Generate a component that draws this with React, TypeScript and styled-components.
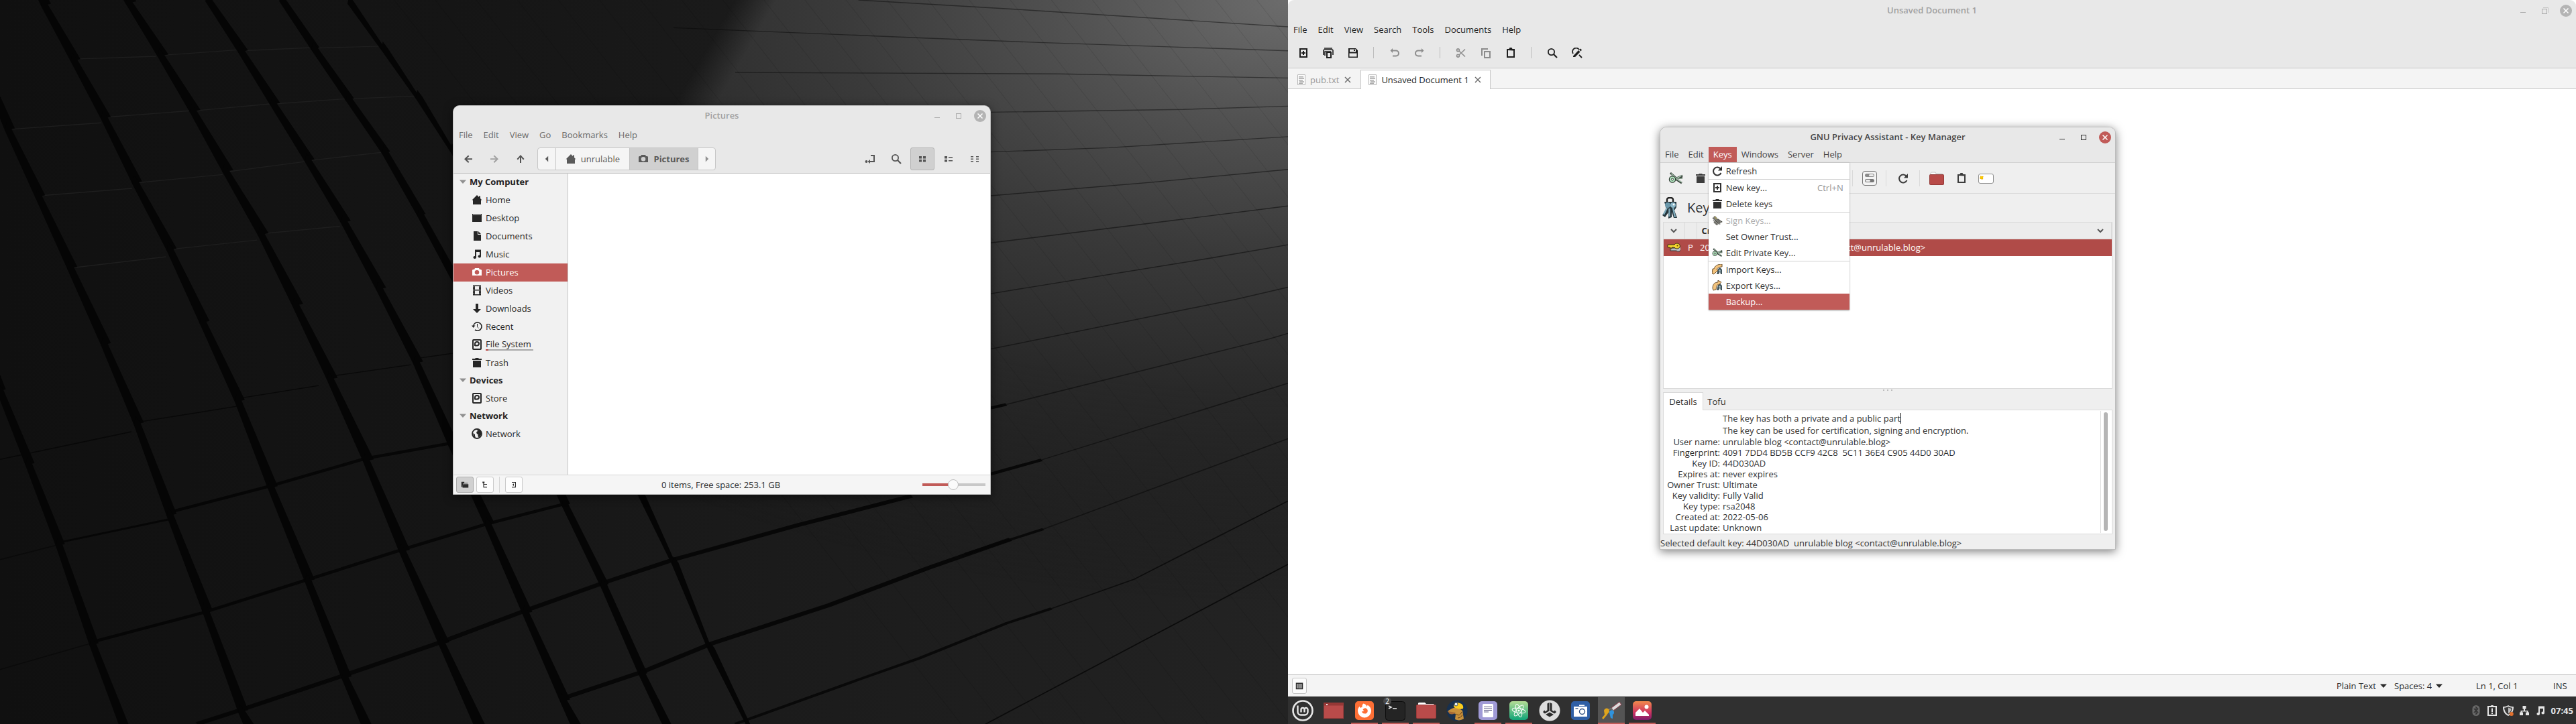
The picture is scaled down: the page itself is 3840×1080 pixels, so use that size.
import React from "react";
import styled, { createGlobalStyle } from "styled-components";

const GlobalStyle = createGlobalStyle`
  *, *::before, *::after { box-sizing: border-box; }
  body { margin: 0; background: #111; }
  body, button, input, select, textarea {
    font-family: "Open Sans", "Noto Sans", sans-serif;
    font-size: 13px;
    line-height: 18px;
    color: #2b2b2b;
  }
  button { background: none; border: 0; padding: 0; margin: 0; color: inherit; white-space: nowrap; }
  h1, h2, h3, p, ul, dl, dd, dt { margin: 0; padding: 0; font-weight: inherit; font-size: inherit; }
  ul { list-style: none; }
  svg { display: block; flex: none; }
`;

const ACCENT = "#c15b58";

/* ---------- symbolic icons (16 px grid) ---------- */

const glyphs: Record<string, React.ReactNode> = {
  home: <path d="M8 1 0.5 8.5H2V15h12V8.500h1.500L13 6V2.500h-2V4z" />,
  desktop: <path fillRule="evenodd" d="M1 2h14v12H1zM2 3v1h12V3z" />,
  document: <path fillRule="evenodd" d="M3 1h6v5h5v9H3zM10 1l4 4h-4z" />,
  music: <path d="M5 1.500h9V11.500a2.300 2 0 1 1-2-2V5H7v8a2.300 2 0 1 1-2-2z" />,
  camera: <path fillRule="evenodd" d="M5 2h6l1 2h2l1 1v8H1V5l1-1h2zM8 5a3.300 3.300 0 1 0 0 6.600A3.300 3.300 0 0 0 8 5z" />,
  video: <path fillRule="evenodd" d="M2 .5h12v15H2zM5 2v5h6V2zM5 8.500V14h6V8.500zM3 2v1h1V2zm0 2v1h1V4zm0 2v1h1V6zm0 2v1h1V8zm0 2v1h1v-1zm0 2v1h1v-1zm9-10v1h1V2zm0 2v1h1V4zm0 2v1h1V6zm0 2v1h1V8zm0 2v1h1v-1zm0 2v1h1v-1z" />,
  download: <path d="M6 1h4v8h4l-6 6-6-6h4z" />,
  recent: (
    <g fill="none" stroke="currentColor">
      <path strokeWidth="1.600" d="M2.600 8.500A6.200 6.200 0 1 1 5 13" />
      <path d="M8.500 4v4.500l2 2" />
      <path fill="currentColor" stroke="none" d="M0 6.500h5.500L2.500 10z" />
    </g>
  ),
  disk: (
    <g fill="none" stroke="currentColor">
      <rect x="2" y="1" width="12" height="14" rx="1" strokeWidth="2" />
      <path strokeWidth="2" d="M5 10V6.500a3 2.800 0 1 1 3 3H5" />
    </g>
  ),
  trash: <path d="M1 2h4l1-1h4l1 1h4v2H1zM2 5h12v10H2z" />,
  globe: (
    <>
      <circle cx="8" cy="8" r="7" fill="none" stroke="currentColor" strokeWidth="1.800" />
      <path d="M8 1.500 14 4v6l-3 3.500-1.500-1.500V8.500H8L7 5.500 9 4zM2 7l3 2v2l1 3-3-2z" />
    </>
  ),
  back: <path d="M8 2.500 9.400 4 6 7.200h8v2H6L9.400 12.500 8 14 2 8.200z" />,
  forward: <path d="M8 2.500 6.600 4 10 7.200H2v2h8L6.600 12.500 8 14l6-5.800z" />,
  up: <path d="M2.500 8 4 9.400 7 6v8h2V6l3 3.400L13.500 8 8 2z" />,
  triLeft: <path d="M10.500 3v10L5.500 8z" />,
  triRight: <path d="M5.500 3v10l5-5z" />,
  triDown: <path d="M3 5.500h10l-5 5.500z" />,
  chevron: <path fill="none" stroke="currentColor" strokeWidth="2" d="M4 6l4 4 4-4" />,
  location: (
    <>
      <circle cx="2.500" cy="12" r="1.900" />
      <path d="M8 9v2h5V4H9V2h6v11H8v2l-3.500-3z" />
    </>
  ),
  search: (
    <g fill="none" stroke="currentColor">
      <circle cx="6.500" cy="6.500" r="4.600" strokeWidth="1.800" />
      <path strokeWidth="2.200" d="M10 10l5 5" />
    </g>
  ),
  grid: <path d="M3 4h4v3.500H3zm6 0h4v3.500H9zM3 9h4v3.500H3zm6 0h4v3.500H9z" />,
  list: <path d="M2 4h4v3.500H2zm0 5h4v3.500H2zM8 5h6v1.500H8zm0 5h6v1.500H8z" />,
  compact: <path d="M2 4h4v1.500H2zm0 3.500h4V9H2zM2 11h4v1.500H2zm8-7h4v1.500h-4zm0 3.500h4V9h-4zm0 3.500h4v1.500h-4z" />,
  folder: <path d="M2 3h5v2h6v1H5L4 12H2zM5 7h9v6H4z" />,
  tree: <path d="M3 2h4v3H6v1.500h6V8H6v4h6v1.500H4.500V5H3z" />,
  collapse: <path d="M4 2.500h8v11H4V12h6.500V4H4zM8 5.500v5L5 8z" />,
  plusDoc: <path fillRule="evenodd" d="M2 1h12v14H2zM4 3v10h8V3zM7 5h2v2h2v2H9v2H7V9H5V7h2z" />,
  folders: (
    <>
      <path fill="none" stroke="currentColor" strokeWidth="1.600" d="M2 1h12M1 11V4l1-1h12l1 1v7" />
      <path fill="none" stroke="currentColor" strokeWidth="1.600" d="M3 12V6h9" />
      <path fillRule="evenodd" d="M5 6h8v10H5zM7 8v6h4V8z" />
    </>
  ),
  save: <path fillRule="evenodd" d="M1 1h11l3 3v11H1zM3 2.500v4h9v-4zM2.500 8.500v5h11v-5zM9 3h2v2H9z" />,
  undo: <path d="M5 1 1.500 4.500 5 8V5.500h5a3 3 0 0 1 0 6H5v2h5a5 5 0 0 0 0-10H5z" />,
  redo: <path d="M11 1l3.500 3.500L11 8V5.500H6a3 3 0 0 0 0 6h5v2H6a5 5 0 0 1 0-10h5z" />,
  cut: (
    <g fill="none" stroke="currentColor" strokeWidth="1.600">
      <circle cx="3.500" cy="3.800" r="1.900" />
      <circle cx="3.500" cy="12.200" r="1.900" />
      <path d="M5 5l9 8.500M5 11l9-8.500" />
    </g>
  ),
  copy: <path fillRule="evenodd" d="M1 1h10v2H3v9H1zM5 5h10v11H5zm2 2v7h6V7z" />,
  paste: <path fillRule="evenodd" d="M2 2h3.500l1-2h3l1 2H14v13H2zm2 2v9h8V4.500z" />,
  replace: (
    <>
      <path fill="none" stroke="currentColor" strokeWidth="1.800" d="M2 9a5 5 0 0 1 9-6M11 11l4 4" />
      <path d="M2 12.500 10 4l2.500 2.500L5 14H2zM11 3l2-1.500L15 3.500 13.500 5.500z" />
    </>
  ),
  refresh: (
    <g fill="none" stroke="currentColor" strokeWidth="2">
      <path d="M13 5A6 6 0 1 0 13.500 11" />
      <path fill="currentColor" stroke="none" d="M15 1v6.500H9z" />
    </g>
  ),
  sidebar: (
    <>
      <path fill="#8a8a8a" d="M6 3h7v10H6z" />
      <path fillRule="evenodd" d="M1 2h14v13H1zM3 4v9h1.500V4zM6 4v9h7V4z" />
    </>
  ),
  bluetooth: (
    <>
      <rect x="2.500" y="0" width="11" height="16" rx="5.500" fill="#686868" />
      <path fill="none" stroke="#303030" strokeWidth="1.200" d="M4.800 5l6 5.500L8 13.300V2.700l2.800 2.800L4.800 11" />
    </>
  ),
  notify: <path fillRule="evenodd" d="M1 1h4.500L7 0h2l1.500 1H15v15H1zM3 3v11h10V3zM7 4.500h2V10H7zM7 11h2v2H7z" />,
  shield: (
    <>
      <path d="M8 0c2 1.500 5 2.200 8 2.200 0 6-2 10.800-8 13.800C2 13 0 8 0 2.200 3 2.200 6 1.500 8 0z" />
      <path fill="#3a3a3a" d="M8 2c2 1 4 1.600 6 1.700-.3 4.500-2 7.800-6 10.300C4 11.500 2.300 8 2 3.700 4 3.600 6 3 8 2z" />
      <path fill="#bdbdbd" d="M8 3.500c1.500.8 3 1.200 4.500 1.400C12 8.500 11 10.500 8 12.500z" />
      <circle cx="12.800" cy="13" r="3" fill="#e0702f" />
    </>
  ),
  network: <path d="M5.500 1h5v4.500H9V8h4.500v2.500H15V15h-5v-4.500h2V9.500H4v1H6V15H1v-4.500h1.500V8H7V5.500H5.500z" />,
  textFile: (
    <>
      <path fill="#fcfcfc" stroke="#b4b4b4" d="M2.500 .5h11v15h-11z" />
      <path fill="none" stroke="#a8a8a8" strokeWidth="1.500" d="M4 3.700h7M4 6.200h8M4 8.700h6M5 11h7M4 13.200h6" />
    </>
  ),
};

const Sym = ({ name, size = 16 }: { name: string; size?: number }) => (
  <svg width={size} height={size} viewBox="0 0 16 16" fill="currentColor" aria-hidden="true">
    {glyphs[name]}
  </svg>
);

/* ---------- coloured drawings of the key manager ---------- */

const EditKeyArt = ({ size = 22 }: { size?: number }) => (
  <svg width={size} height={size} viewBox="0 0 22 22" aria-hidden="true">
    <path d="M3 3l9 8 9-4M11 12l9 6M12 11l9-1" stroke="#2e3a32" strokeWidth="3" fill="none" />
    <path d="M4 4l8 7 8-4M12 12l8 5M13 11h8" stroke="#b9d8c0" strokeWidth="1.200" fill="none" />
    <circle cx="6" cy="12.500" r="4.600" fill="#b7ecc4" stroke="#2e3a32" strokeWidth="1.300" />
    <circle cx="6" cy="12.500" r="1.600" fill="#fff" stroke="#2e3a32" />
  </svg>
);

const SignArt = () => (
  <svg width="16" height="16" viewBox="0 0 16 16" aria-hidden="true">
    <path d="M1 4l4-3 5 6-5 3zM2 11l8-5 6 4-9 5z" fill="#8d8d86" />
    <path d="M1 4l9 8M3 2l9 9M2 8l6 7M5 8l8 6M9 6l6 4" stroke="#33332f" strokeDasharray="1 1" strokeWidth="1.300" />
    <path d="M4 2l3 4" stroke="#d6c14a" />
  </svg>
);

const TransferArt = ({ out }: { out?: boolean }) => (
  <svg width="16" height="16" viewBox="0 0 16 16" aria-hidden="true">
    <path d="M9 7l3-2 3 3v7h-2l-1-4-2 4H7z" fill="#43565c" />
    <path d="M10 9l2-1 1 2-1 2z" fill="#a7c3ce" />
    <path d={out ? "M1 12C1 6 4 3 9 3V0l5 3-4 4C7 6 7 9 6 14L2 15z" : "M0 14l1-7h2C4 3 8 0 15 0v4C10 4 8 6 7 8l2 1-6 6z"} fill="#f3c37c" stroke="#6b5030" />
  </svg>
);

const KeyRingArt = () => (
  <svg width="24" height="32" viewBox="0 0 24 32" aria-hidden="true">
    <rect x="8" y="1" width="9" height="9" rx="3" fill="#f4f4f4" stroke="#222" strokeWidth="2.400" />
    <path d="M4 7h18v8l-3 5 4 11h-5l-3-9v8l-5 2v-9l-5 7-4-3 6-9z" fill="#25353c" />
    <circle cx="9" cy="12" r="4" fill="#6a98ab" />
    <circle cx="17" cy="12" r="4" fill="#8ab6c8" />
    <circle cx="18" cy="11" r="1.500" fill="#fff" />
    <path d="M8 16l-5 10M11.500 17v12M17 16l3 14" stroke="#7eaabb" strokeWidth="2.400" />
  </svg>
);

const KeyPairArt = () => (
  <svg width="20" height="14" viewBox="0 0 20 14" aria-hidden="true">
    <path d="M5 8h8a4 4 0 1 1 1 4H5z" fill="#b9c0c4" stroke="#333" />
    <path d="M1 3h10a4.500 4 0 1 1 0 4H7v2H5V7H1z" fill="#f4d62e" stroke="#3b3410" />
    <circle cx="15.500" cy="4.500" r="1.100" fill="#5a3510" />
  </svg>
);

const PrefsArt = () => (
  <svg width="22" height="22" viewBox="0 0 22 22" aria-hidden="true">
    <rect x=".5" y=".5" width="21" height="21" rx="3.500" fill="#f4f4f4" stroke="#777" />
    <rect x="4" y="4" width="14" height="5" rx="2.500" fill="#8a8a8a" />
    <rect x="10" y="5" width="7" height="3" rx="1.500" fill="#eee" />
    <rect x="4" y="12" width="14" height="5" rx="2.500" fill="#777" />
    <rect x="5" y="13" width="7" height="3" rx="1.500" fill="#eee" />
  </svg>
);

const FolderArt = () => (
  <svg width="22" height="20" viewBox="0 0 22 20" aria-hidden="true">
    <path d="M2 5V2l1-1h6l1 2h9l1 1v3H2z" fill="#fff" stroke="#c4c4c4" />
    <rect x=".5" y="4.500" width="21" height="15" rx="1" fill="#b84a48" stroke="#943a38" />
  </svg>
);

const CardArt = () => (
  <svg width="23" height="16" viewBox="0 0 23 16" aria-hidden="true">
    <rect x=".5" y="1.500" width="22" height="14" rx="2.500" fill="#fff" stroke="#8f8f8f" />
    <rect x="3" y="5" width="4" height="4" fill="#f8d000" stroke="#e89a00" strokeDasharray="1 1" />
  </svg>
);

/* ---------- taskbar drawings (32 px grid) ---------- */

const Rounded = ({ fill, children }: { fill: string; children?: React.ReactNode }) => (
  <>
    <rect x="2" y="2" width="28" height="28" rx="5" fill={fill} />
    {children}
  </>
);

const taskArt: Record<string, React.ReactNode> = {
  mint: (
    <g fill="none" stroke="#e6e6e6">
      <circle cx="16" cy="16" r="14.500" strokeWidth="2.600" />
      <path strokeWidth="2.400" d="M8.500 8.500V18a4.500 4.500 0 0 0 4.500 4.500h6a4.500 4.500 0 0 0 4.500-4.500v-3.500a2.500 2.500 0 0 0-5 0V18.500M18.500 14.500a2.500 2.500 0 0 0-5 0v4" />
    </g>
  ),
  show: (
    <>
      <rect x="1.500" y="4.500" width="29" height="23" fill="#b94b4a" stroke="#9c3b3a" />
      <rect x="1" y="4" width="30" height="4.500" fill="#953836" />
      <rect x="5" y="6" width="2" height="2" fill="#eee" />
    </>
  ),
  firefox: (
    <Rounded fill="#fd6f35">
      <path fill="#fff" d="M14.500 5.500c3 .8 4.500 2.500 5 4.500l1.200-2.200c3.600 2 5.300 5 5.300 8.700a10 10 0 0 1-20 0c0-3 1-5 2.600-6.800l1 2.300c1-.8 2-1 3-1-.3-2.200.2-4 1.900-5.500z" />
      <path fill="#fd6f35" d="M17.500 12.200c-1.800.2-3 .9-3.600 1.900-.6 1-.2 1.500 1.600 1.800-.7 1.300-1.900 1.700-3.600 1.100.4 2.300 2 3.600 4.300 3.600 2.700 0 4.600-1.700 4.600-4.200 0-2-1.200-3.600-3.300-4.200z" />
    </Rounded>
  ),
  terminal: (
    <>
      <rect x="1.500" y="2.500" width="29" height="28" rx="4" fill="#242424" stroke="#0c0c0c" />
      <path stroke="#eee" strokeWidth="1.500" fill="none" d="M6 9l4 2-4 2M12 13h6" />
    </>
  ),
  files: (
    <>
      <path d="M4 8V5l1-1h9l2 2h11l1 1v4H4z" fill="#fff" />
      <rect x="1.500" y="7.500" width="29" height="20" rx="1" fill="#b94b4a" stroke="#9c3b3a" />
    </>
  ),
  mole: (
    <>
      <circle cx="16" cy="16" r="15.500" fill="#17304f" />
      <path d="M2 17c6-5 13-7 17-4l5 3 2 12c-4 3-9 3-13 1l1-8C10 19 6 20 2 17z" fill="#c8913c" />
      <path d="M2 17l3 4c4 1 7 0 9-2" fill="#a86b35" />
      <path d="M15 21c3 3 6 2 8-3M17 27c3 0 6-2 7-5" stroke="#5d3a18" fill="none" />
      <path d="M11 10c0-5 5-7 9-5 4 1 6 4 5 8l-4 1-8-2z" fill="#f9cc1e" />
      <circle cx="14.500" cy="6.500" r="2.500" fill="#e8f0f5" stroke="#40505a" />
    </>
  ),
  editor: (
    <Rounded fill="#a09ad6">
      <rect x="8" y="6" width="16" height="20" rx="1.500" fill="#fff" />
      <path stroke="#5d5a86" strokeWidth="1.200" d="M10 10.500h12M10 13h12M10 15.500h12M10 18h7" />
    </Rounded>
  ),
  atom: (
    <>
      <defs>
        <linearGradient id="atomBg" x1="0" y1="0" x2="0" y2="1">
          <stop offset="0" stopColor="#b5dd95" />
          <stop offset="1" stopColor="#0fa578" />
        </linearGradient>
      </defs>
      <Rounded fill="url(#atomBg)">
        <g fill="none" stroke="#fff">
          <ellipse cx="16" cy="16" rx="10" ry="3.500" transform="rotate(10 16 16)" />
          <ellipse cx="16" cy="16" rx="10" ry="3.500" transform="rotate(70 16 16)" />
          <ellipse cx="16" cy="16" rx="10" ry="3.500" transform="rotate(130 16 16)" />
        </g>
        <circle cx="16" cy="16" r="1.600" fill="#fff" />
      </Rounded>
    </>
  ),
  tri: (
    <>
      <circle cx="16" cy="16" r="15.500" fill="#dedede" />
      <path fill="#2b2b2b" d="M12.500 5.500l3-1.500v12.500l-6.500 4-2.500-1.500V17l2.500-1.500v2l3.500-2zM19.500 5.500l-3-1.500v12.500l6.500 4 2.500-1.500V17L23 15.500v2l-3.500-2zM16 18.500l6 3.500-6 3.500-6-3.500z" />
    </>
  ),
  shot: (
    <Rounded fill="#2f5fa5">
      <path fill="#fff" d="M14 7.500h8V9h-8zM6 10h20v15H6z" />
      <circle cx="18.500" cy="17.500" r="4" fill="#fff" stroke="#2f4f80" strokeWidth="1.400" />
      <path d="M8.500 13h4" stroke="#2f4f80" strokeWidth="1.400" />
    </Rounded>
  ),
  gpa: (
    <>
      <path d="M16 12 28 3l3 4-12 9z" fill="#dcdcdc" stroke="#8d3b49" />
      <path d="M7 16l9-3 3 3v4" fill="none" stroke="#777" strokeWidth="1.600" />
      <path d="M5 16a4 4 0 1 1 6 4l-2 3-5 6-2-2 4-5z" fill="#e0a51c" />
      <path d="M13 19a3.500 3.500 0 1 1 5 3v6l-3-1z" fill="#2f93dd" />
    </>
  ),
  pictures: (
    <>
      <defs>
        <linearGradient id="picBg" x1="0" y1="0" x2="0" y2="1">
          <stop offset="0" stopColor="#f28a4c" />
          <stop offset=".6" stopColor="#cf3462" />
          <stop offset="1" stopColor="#7c1b6a" />
        </linearGradient>
      </defs>
      <Rounded fill="url(#picBg)">
        <circle cx="22.500" cy="10.500" r="3" fill="#fff" />
        <path fill="#fff" d="M6 24v-5l6-6 5 6 3-3 6 6v2z" />
      </Rounded>
    </>
  ),
};

/* ---------- wallpaper ---------- */

type Pt = [number, number];

const ridges: { w: number; pts: Pt[] }[] = [
  { w: 14, pts: [[-30, 700], [-2, 840], [33, 1000], [70, 1175], [111, 1390], [148, 1568]] },
  { w: 15, pts: [[-25, 130], [8, 275], [45, 420], [84, 575], [125, 740], [165, 912], [205, 1110], [248, 1315], [292, 1535], [300, 1568]] },
  { w: 15, pts: [[25, -100], [52, 5], [88, 125], [125, 250], [163, 390], [205, 535], [245, 692], [288, 863], [328, 1050], [373, 1252], [418, 1462], [443, 1568]] },
  { w: 16, pts: [[120, -100], [155, 0], [194, 115], [233, 235], [273, 365], [316, 502], [358, 655], [400, 815], [444, 992], [488, 1188], [536, 1388], [580, 1568]] },
  { w: 15, pts: [[252, -5], [292, 106], [331, 220], [373, 342], [417, 475], [460, 620], [505, 780], [548, 958], [592, 1130], [638, 1322], [684, 1512], [698, 1568]] },
  { w: 13, pts: [[342, -5], [381, 100], [423, 210], [467, 325], [510, 460], [555, 610], [600, 770], [645, 930], [686, 1088], [733, 1262], [780, 1455], [810, 1568]] },
  { w: 7, pts: [[425, 0], [466, 100], [508, 205], [550, 320], [610, 500], [700, 780], [780, 1070], [820, 1215], [864, 1400], [912, 1568]] },
];

const seams: { w: number; o: number; pts: Pt[] }[] = [
  { w: 4, o: 0.9, pts: [[72, 1175], [205, 1125]] },
  { w: 6, o: 0.9, pts: [[205, 1110], [330, 1052], [445, 993], [548, 960]] },
  { w: 6, o: 0.9, pts: [[113, 1390], [245, 1328], [375, 1255], [490, 1190], [594, 1134], [690, 1090]] },
  { w: 8, o: 0.9, pts: [[240, 1568], [297, 1535], [420, 1462], [538, 1390], [640, 1322], [735, 1262], [820, 1212], [970, 1138], [1110, 1074]] },
  { w: 8, o: 0.9, pts: [[686, 1512], [782, 1455], [866, 1394], [1010, 1310], [1130, 1230], [1230, 1168]] },
  { w: 5, o: 0.85, pts: [[1175, 1200], [1270, 1146]] },
  { w: 5, o: 0.85, pts: [[895, 1568], [1045, 1472], [1120, 1425], [1225, 1350], [1280, 1318]] },
  { w: 2, o: 0.7, pts: [[1280, 1318], [1380, 1255], [1568, 1085]] },
  { w: 2, o: 0.8, pts: [[1200, 1568], [1568, 1222]] },
  { w: 2, o: 0.8, pts: [[0, 995], [160, 935]] },
  { w: 2, o: 0.8, pts: [[165, 915], [288, 880]] },
  { w: 2, o: 0.8, pts: [[290, 863], [388, 835]] },
  { w: 2, o: 0.8, pts: [[402, 815], [500, 790]] },
  { w: 2, o: 0.8, pts: [[505, 777], [552, 765]] },
  { w: 2, o: 0.6, pts: [[0, 1450], [113, 1392]] },
  { w: 2, o: 0.6, pts: [[0, 1212], [70, 1180]] },
  { w: 6, o: 0.9, pts: [[1195, 888], [1225, 876]] },
  { w: 6, o: 0.9, pts: [[1195, 1032], [1268, 996]] },
  { w: 2, o: 0.45, pts: [[1045, 0], [1235, 20], [1568, 58]] },
  { w: 2, o: 0.45, pts: [[820, 60], [1120, 82], [1265, 92], [1568, 110]] },
  { w: 2, o: 0.45, pts: [[895, 157], [1290, 160], [1568, 169]] },
  { w: 2, o: 0.45, pts: [[1206, 243], [1440, 237], [1568, 230]] },
  { w: 2, o: 0.45, pts: [[1206, 329], [1350, 320], [1568, 296]] },
  { w: 2, o: 0.5, pts: [[1206, 424], [1400, 395], [1568, 367]] },
  { w: 2, o: 0.5, pts: [[1206, 526], [1430, 477], [1568, 446]] },
  { w: 2, o: 0.5, pts: [[1206, 636], [1470, 560], [1568, 530]] },
  { w: 2, o: 0.5, pts: [[1206, 756], [1505, 648], [1568, 622]] },
  { w: 2, o: 0.5, pts: [[1225, 876], [1545, 734], [1568, 722]] },
  { w: 2, o: 0.5, pts: [[1268, 996], [1568, 830]] },
  { w: 2, o: 0.5, pts: [[1270, 1146], [1568, 950]] },
];

/* faint edges along the lit tiles, where each tile meets the next one */
const highlights: Pt[][] = [
  [[90, 128], [190, 122]],
  [[195, 120], [290, 108]],
  [[294, 110], [380, 103]],
  [[384, 104], [464, 100]],
  [[127, 254], [231, 240]],
  [[236, 240], [329, 225]],
  [[334, 225], [421, 214]],
  [[426, 214], [506, 208]],
  [[12, 280], [123, 266]],
  [[48, 424], [161, 408]],
  [[166, 396], [271, 378]],
  [[277, 372], [371, 350]],
  [[376, 348], [465, 330]],
  [[320, 506], [414, 490]],
  [[208, 540], [313, 520]],
  [[88, 580], [202, 556]],
];

const slants = Array.from({ length: 26 }, (_, i) => 480 + i * 50);

const WallpaperSvg = styled.svg`
  position: absolute;
  inset: 0;
  width: 100%;
  height: 100%;
`;

const Wallpaper = () => (
  <WallpaperSvg viewBox="0 0 1568 1568" preserveAspectRatio="none" aria-hidden="true">
    <defs>
      <linearGradient id="base" x1="0" y1="0" x2="1" y2="0">
        <stop offset="0" stopColor="#101010" />
        <stop offset=".35" stopColor="#151515" />
        <stop offset=".6" stopColor="#1b1b1b" />
        <stop offset="1" stopColor="#232323" />
      </linearGradient>
      <radialGradient id="glow" gradientUnits="userSpaceOnUse" cx="1568" cy="0" r="1300">
        <stop offset="0" stopColor="#6c6c6c" />
        <stop offset=".2" stopColor="#525252" />
        <stop offset=".42" stopColor="#3a3a3a" />
        <stop offset=".65" stopColor="#292929" />
        <stop offset="1" stopColor="#1f1f1f" stopOpacity="0" />
      </radialGradient>
      <linearGradient id="edge" gradientUnits="userSpaceOnUse" x1="868" y1="80" x2="914" y2="95">
        <stop offset="0" stopColor="#fff" stopOpacity="0" />
        <stop offset="1" stopColor="#fff" />
      </linearGradient>
      <mask id="beam">
        <rect width="1568" height="1568" fill="url(#edge)" />
      </mask>
    </defs>
    <rect width="1568" height="1568" fill="url(#base)" />
    <rect width="1568" height="1568" fill="url(#glow)" mask="url(#beam)" />
    <g stroke="#000" strokeOpacity=".09" strokeWidth="1">
      {slants.map((x) => (
        <line key={x} x1={x} y1="0" x2={x + 690} y2="1568" />
      ))}
    </g>
    {highlights.map((h, i) => (
      <polyline key={i} points={h.join(" ")} fill="none" stroke="#1e1e1e" strokeWidth="2" />
    ))}
    {seams.map((s, i) => (
      <polyline key={i} points={s.pts.join(" ")} fill="none" stroke="#060606" strokeOpacity={s.o} strokeWidth={s.w} />
    ))}
    {ridges.map((r, i) =>
      r.pts.slice(0, -1).map((p, j) => {
        const q = r.pts[j + 1];
        return (
          <polygon
            key={`${i}-${j}`}
            fill="#050505"
            points={`${p[0]},${p[1] - 10} ${p[0] + 6},${p[1] + 4} ${q[0] + r.w - 5},${q[1] + 3} ${q[0] - 2},${q[1] + 8} ${p[0] - 2},${p[1] + 8}`}
          />
        );
      })
    )}
  </WallpaperSvg>
);

/* ---------- shared window parts ---------- */

const Desktop = styled.div`
  display: grid;
  grid-template-columns: 1fr 1fr;
  min-height: 100vh;
`;

const Screen = styled.section`
  position: relative;
  display: flex;
  flex-direction: column;
  min-width: 0;
  overflow: hidden;
`;

const FloatingWindow = styled.article<{ $x: number; $y: number; $w: number; $h: number; $bg: string }>`
  position: absolute;
  left: ${(p) => p.$x}px;
  top: ${(p) => p.$y}px;
  width: ${(p) => p.$w}px;
  height: ${(p) => p.$h}px;
  display: flex;
  flex-direction: column;
  background: ${(p) => p.$bg};
  border: 1px solid #bdbdbd;
  border-radius: 10px 10px 0 0;
  box-shadow: 0 3px 14px rgba(0, 0, 0, 0.5);
`;

const TitleBar = styled.header<{ $h: number }>`
  display: grid;
  grid-template-columns: 1fr auto 1fr;
  align-items: center;
  height: ${(p) => p.$h}px;
  padding: 0 6px;
  background: #e8e8e8;
  border-radius: 9px 9px 0 0;
`;

const Title = styled.h1<{ $active?: boolean }>`
  grid-column: 2;
  padding-bottom: 2px;
  font-weight: 600;
  color: ${(p) => (p.$active ? "#454545" : "#a0a0a0")};
`;

const Controls = styled.div`
  display: flex;
  justify-content: flex-end;
  gap: 14px;
`;

const ControlButton = styled.button`
  width: 18px;
  height: 18px;
`;

const WindowControls = ({ active, restore }: { active?: boolean; restore?: boolean }) => {
  const ink = active ? "#333" : "#ababab";
  return (
    <Controls>
      <ControlButton aria-label="Minimize">
        <svg width="18" height="18"><path d="M5 11.500h8" stroke={ink} /></svg>
      </ControlButton>
      <ControlButton aria-label="Maximize">
        <svg width="18" height="18" fill="none" stroke={ink}>
          {restore && <path d="M7 4.500h7.500v7.500" strokeOpacity=".6" />}
          <rect x="5.500" y={restore ? 6.500 : 5.500} width="7" height="7" />
        </svg>
      </ControlButton>
      <ControlButton aria-label="Close">
        <svg width="18" height="18">
          <circle cx="9" cy="9" r="9" fill={active ? ACCENT : "#b4b4b4"} />
          <path d="M5.500 5.500l7 7M12.500 5.500l-7 7" stroke="#fff" strokeWidth="1.500" />
        </svg>
      </ControlButton>
    </Controls>
  );
};

const MenuBar = styled.nav<{ $h: number; $ink: string }>`
  display: flex;
  height: ${(p) => p.$h}px;
  background: #e8e8e8;
  color: ${(p) => p.$ink};
`;

const MenuButton = styled.button<{ $pad: number; $open?: boolean }>`
  padding: 0 ${(p) => p.$pad}px 2px;
  background: ${(p) => (p.$open ? ACCENT : "transparent")};
  color: ${(p) => (p.$open ? "#fff" : "inherit")};
`;

/* ---------- file manager ---------- */

const FilesToolbar = styled.div`
  display: flex;
  align-items: center;
  height: 44px;
  padding: 0 2px 0 4px;
  background: #e8e8e8;
  border-bottom: 1px solid #c6c6c6;
  color: #555;
`;

const ToolButton = styled.button<{ $on?: boolean; $dim?: boolean }>`
  display: grid;
  place-items: center;
  width: 36px;
  height: 34px;
  margin-right: 3px;
  border-radius: 3px;
  border: 1px solid ${(p) => (p.$on ? "#b4b4b4" : "transparent")};
  background: ${(p) => (p.$on ? "#d0d0d0" : "transparent")};
  color: ${(p) => (p.$dim ? "#a2a2a2" : "inherit")};
`;

const PathBar = styled.div`
  display: flex;
  margin: 0 auto 0 4px;
  border: 1px solid #c6c6c6;
  border-radius: 4px;
  background: #f5f5f5;
`;

const PathButton = styled.button<{ $w: number; $on?: boolean; $dim?: boolean }>`
  display: flex;
  align-items: center;
  justify-content: center;
  gap: 7px;
  width: ${(p) => p.$w}px;
  height: 32px;
  border-left: 1px solid #c6c6c6;
  background: ${(p) => (p.$on ? "#d0d0d0" : "transparent")};
  font-weight: ${(p) => (p.$on ? 700 : 400)};
  color: ${(p) => (p.$dim ? "#909090" : "#5a5a5a")};
  &:first-child { border-left: 0; }
`;

const FilesBody = styled.div`
  flex: 1;
  display: flex;
  min-height: 0;
`;

const Sidebar = styled.aside`
  width: 171px;
  background: #f1f1f1;
  border-right: 1px solid #c6c6c6;
`;

const Group = styled.h2`
  display: flex;
  align-items: center;
  gap: 2px;
  height: 26px;
  padding: 0 0 2px 6px;
  font-weight: 700;
  color: #222;
  svg { color: #909090; }
`;

const Place = styled.button<{ $on?: boolean }>`
  display: flex;
  align-items: center;
  gap: 5px;
  width: 100%;
  height: 27px;
  padding: 0 0 2px 27px;
  background: ${(p) => (p.$on ? ACCENT : "transparent")};
  color: ${(p) => (p.$on ? "#fff" : "#262626")};
`;

const Usage = styled.span`
  padding-right: 3px;
  border-bottom: 2px solid #a8a8a8;
  border-image: linear-gradient(90deg, #b8423f 6px, #a8a8a8 6px) 2;
  line-height: 16px;
`;

const FilesView = styled.main`
  flex: 1;
  background: #fff;
`;

const FilesStatus = styled.footer`
  display: grid;
  grid-template-columns: 1fr auto 1fr;
  align-items: center;
  height: 29px;
  padding: 0 7px 0 4px;
  border-top: 1px solid #d6d6d6;
  background: #f5f5f5;
`;

const StatusButtons = styled.div`
  display: flex;
  align-items: center;
  gap: 4px;
`;

const SmallButton = styled.button<{ $on?: boolean }>`
  display: grid;
  place-items: center;
  width: 26px;
  height: 24px;
  border: 1px solid ${(p) => (p.$on ? "#ababab" : "#cacaca")};
  border-radius: 3px;
  background: ${(p) => (p.$on ? "#d0d0d0" : "#fdfdfd")};
`;

const SmallRule = styled.i`
  width: 1px;
  height: 24px;
  margin: 0 4px;
  background: #d6d6d6;
`;

const Zoom = styled.input`
  justify-self: end;
  appearance: none;
  width: 94px;
  height: 16px;
  margin: 0;
  background: linear-gradient(90deg, ${ACCENT} 49%, #c8c8c8 49%) center / 100% 4px no-repeat;
  &::-webkit-slider-thumb {
    appearance: none;
    width: 16px;
    height: 16px;
    border: 1px solid #bdbdbd;
    border-radius: 50%;
    background: #fbfbfb;
  }
`;

const places = [
  { title: "My Computer", items: [["home", "Home"], ["desktop", "Desktop"], ["document", "Documents"], ["music", "Music"], ["camera", "Pictures"], ["video", "Videos"], ["download", "Downloads"], ["recent", "Recent"], ["disk", "File System"], ["trash", "Trash"]] },
  { title: "Devices", items: [["disk", "Store"]] },
  { title: "Network", items: [["globe", "Network"]] },
];

const FileManager = () => (
  <FloatingWindow $x={675} $y={157} $w={802} $h={581} $bg="#f5f5f5">
    <TitleBar $h={30}>
      <Title>Pictures</Title>
      <WindowControls />
    </TitleBar>
    <MenuBar $h={27} $ink="#6a6a6a">
      {["File", "Edit", "View", "Go", "Bookmarks", "Help"].map((m) => (
        <MenuButton key={m} $pad={8}>{m}</MenuButton>
      ))}
    </MenuBar>
    <FilesToolbar>
      <ToolButton aria-label="Back"><Sym name="back" /></ToolButton>
      <ToolButton aria-label="Forward" $dim><Sym name="forward" /></ToolButton>
      <ToolButton aria-label="Up"><Sym name="up" /></ToolButton>
      <PathBar>
        <PathButton $w={26} aria-label="Scroll left"><Sym name="triLeft" size={14} /></PathButton>
        <PathButton $w={110}><Sym name="home" />unrulable</PathButton>
        <PathButton $w={102} $on><Sym name="camera" />Pictures</PathButton>
        <PathButton $w={26} $dim aria-label="Scroll right"><Sym name="triRight" size={14} /></PathButton>
      </PathBar>
      <ToolButton aria-label="Toggle location entry"><Sym name="location" /></ToolButton>
      <ToolButton aria-label="Search"><Sym name="search" /></ToolButton>
      <ToolButton aria-label="Icon view" $on><Sym name="grid" /></ToolButton>
      <ToolButton aria-label="List view"><Sym name="list" /></ToolButton>
      <ToolButton aria-label="Compact view"><Sym name="compact" /></ToolButton>
    </FilesToolbar>
    <FilesBody>
      <Sidebar>
        {places.map((g) => (
          <section key={g.title}>
            <Group><Sym name="triDown" />{g.title}</Group>
            {g.items.map(([icon, label]) => (
              <Place key={label} $on={label === "Pictures"}>
                <Sym name={icon} />
                {label === "File System" ? <Usage>{label}</Usage> : label}
              </Place>
            ))}
          </section>
        ))}
      </Sidebar>
      <FilesView />
    </FilesBody>
    <FilesStatus>
      <StatusButtons>
        <SmallButton $on aria-label="Places"><Sym name="folder" size={14} /></SmallButton>
        <SmallButton aria-label="Tree"><Sym name="tree" size={12} /></SmallButton>
        <SmallRule />
        <SmallButton aria-label="Hide sidebar"><Sym name="collapse" size={12} /></SmallButton>
      </StatusButtons>
      <span>0 items, Free space: 253.1 GB</span>
      <Zoom type="range" min={0} max={100} defaultValue={49} aria-label="Zoom level" />
    </FilesStatus>
  </FloatingWindow>
);

/* ---------- text editor ---------- */

const Editor = styled.article`
  flex: 1;
  display: flex;
  flex-direction: column;
  background: #fff;
`;

const EditorBar = styled.div`
  display: flex;
  align-items: center;
  height: 44px;
  padding: 0 0 2px 4px;
  background: #e8e8e8;
  border-bottom: 1px solid #c6c6c6;
`;

const EditorTool = styled.button`
  display: grid;
  place-items: center;
  width: 37px;
  height: 34px;
  color: #1e1e1e;
  &:disabled { color: #8c8c8c; }
`;

const EditorRule = styled.i`
  width: 1px;
  height: 17px;
  margin: 0 12px;
  background: #bcbcbc;
`;

const TabStrip = styled.div`
  display: flex;
  align-items: flex-end;
  height: 31px;
  background: #f4f4f4;
  box-shadow: inset 0 -1px #c6c6c6;
`;

const Tab = styled.div<{ $on?: boolean }>`
  display: flex;
  align-items: center;
  gap: 5px;
  height: 29px;
  padding: 0 13px 0 ${(p) => (p.$on ? 9 : 11)}px;
  border: ${(p) => (p.$on ? "1px solid #c6c6c6" : "1px solid transparent")};
  border-bottom: 0;
  background: ${(p) => (p.$on ? "#fff" : "transparent")};
  color: ${(p) => (p.$on ? "#262626" : "#9a9a9a")};
`;

const TabClose = styled.button`
  margin-left: 3px;
`;

const TextArea = styled.textarea`
  flex: 1;
  width: 100%;
  padding: 4px;
  border: 0;
  outline: 0;
  resize: none;
  background: #fff;
`;

const EditorStatus = styled.footer`
  display: flex;
  align-items: center;
  height: 33px;
  padding: 0 0 0 6px;
  border-top: 1px solid #c6c6c6;
  background: #f4f4f4;
`;

const PaneButton = styled.button`
  display: grid;
  place-items: center;
  width: 22px;
  height: 24px;
  margin-right: auto;
  border: 1px solid #c6c6c6;
  border-radius: 3px;
  background: #fcfcfc;
`;

const Picker = styled.label<{ $w: number }>`
  display: flex;
  align-items: center;
  gap: 3px;
  width: ${(p) => p.$w}px;
`;

const PlainSelect = styled.select`
  appearance: none;
  field-sizing: content;
  padding: 0;
  border: 0;
  background: none;
`;

const StatusCell = styled.span<{ $w: number }>`
  width: ${(p) => p.$w}px;
`;

const CloseX = () => (
  <svg width="10" height="10"><path d="M1 1l8 8M9 1l-8 8" stroke="#6e6e6e" strokeWidth="1.500" /></svg>
);

const TextEditor = () => (
  <Editor>
    <TitleBar $h={31}>
      <Title>Unsaved Document 1</Title>
      <WindowControls restore />
    </TitleBar>
    <MenuBar $h={27} $ink="#262626">
      {["File", "Edit", "View", "Search", "Tools", "Documents", "Help"].map((m) => (
        <MenuButton key={m} $pad={8}>{m}</MenuButton>
      ))}
    </MenuBar>
    <EditorBar>
      <EditorTool aria-label="New"><Sym name="plusDoc" /></EditorTool>
      <EditorTool aria-label="Open"><Sym name="folders" /></EditorTool>
      <EditorTool aria-label="Save"><Sym name="save" /></EditorTool>
      <EditorRule />
      <EditorTool aria-label="Undo" disabled><Sym name="undo" /></EditorTool>
      <EditorTool aria-label="Redo" disabled><Sym name="redo" /></EditorTool>
      <EditorRule />
      <EditorTool aria-label="Cut" disabled><Sym name="cut" /></EditorTool>
      <EditorTool aria-label="Copy" disabled><Sym name="copy" /></EditorTool>
      <EditorTool aria-label="Paste"><Sym name="paste" /></EditorTool>
      <EditorRule />
      <EditorTool aria-label="Find"><Sym name="search" /></EditorTool>
      <EditorTool aria-label="Find and replace"><Sym name="replace" /></EditorTool>
    </EditorBar>
    <TabStrip>
      <Tab><Sym name="textFile" />pub.txt<TabClose aria-label="Close pub.txt"><CloseX /></TabClose></Tab>
      <Tab $on><Sym name="textFile" />Unsaved Document 1<TabClose aria-label="Close Unsaved Document 1"><CloseX /></TabClose></Tab>
    </TabStrip>
    <TextArea aria-label="Document text" />
    <EditorStatus>
      <PaneButton aria-label="Toggle side pane"><Sym name="sidebar" size={12} /></PaneButton>
      <Picker $w={86}>
        <PlainSelect aria-label="Language"><option>Plain Text</option></PlainSelect>
        <Sym name="triDown" />
      </Picker>
      <Picker $w={122}>
        <PlainSelect aria-label="Indentation"><option>Spaces: 4</option></PlainSelect>
        <Sym name="triDown" />
      </Picker>
      <StatusCell $w={115}>Ln 1, Col 1</StatusCell>
      <StatusCell $w={34}>INS</StatusCell>
    </EditorStatus>
  </Editor>
);

/* ---------- key manager ---------- */

const KeyMenus = styled(MenuBar)`
  border-bottom: 1px solid #d2d2d2;
`;

const MenuHost = styled.div`
  position: relative;
  display: flex;
`;

const Popup = styled.ul`
  position: absolute;
  z-index: 2;
  left: 0;
  top: 23px;
  width: 210px;
  border-top: 1px solid #c6c6c6;
  background: #fff;
  box-shadow: 0 1px 2px rgba(0, 0, 0, 0.4);
`;

const PopupRow = styled.li<{ $rule?: boolean }>`
  border-top: ${(p) => (p.$rule ? "1px solid #cfcfcf" : "0")};
`;

const PopupItem = styled.button<{ $on?: boolean }>`
  display: grid;
  grid-template-columns: 16px 1fr auto;
  align-items: center;
  column-gap: 5px;
  width: 100%;
  height: 24px;
  padding: 0 9px 0 5px;
  text-align: left;
  background: ${(p) => (p.$on ? ACCENT : "transparent")};
  color: ${(p) => (p.$on ? "#fff" : "#303030")};
  &:disabled { color: #acacac; }
  span { grid-column: 2; }
  kbd { font: inherit; color: #949494; }
`;

const KeyToolbar = styled.div`
  display: flex;
  align-items: center;
  height: 46px;
  padding-left: 4px;
  background: #efefef;
  border-bottom: 1px solid #dadada;
  color: #3c3c3c;
`;

const ToolGroup = styled.div`
  display: flex;
  align-items: center;
  min-width: 276px;
`;

const KeyTool = styled.button`
  display: grid;
  place-items: center;
  width: 37px;
  height: 34px;
`;

const KeyRule = styled.i`
  width: 1px;
  height: 24px;
  margin: 0 6px;
  background: #dadada;
`;

const Heading = styled.h2`
  display: flex;
  align-items: center;
  gap: 14px;
  height: 42px;
  padding-left: 2px;
  font-size: 20px;
  line-height: 28px;
  color: #333;
`;

const KeyList = styled.div`
  flex: 1;
  margin: 0 4px;
  border: 1px solid #dadada;
  background: #fff;
`;

const KeyTable = styled.table`
  width: 100%;
  border-collapse: collapse;
  table-layout: fixed;
  th {
    height: 24px;
    padding: 0 0 0 7px;
    border-bottom: 1px solid #dadada;
    border-right: 1px solid #dadada;
    background: #ececec;
    font-weight: 700;
    text-align: left;
  }
  th svg { color: #555; }
  td {
    height: 26px;
    padding: 0 0 0 5px;
    background: #b04b48;
    color: #fff;
    white-space: nowrap;
  }
`;

const HeadCell = styled.div<{ $center?: boolean }>`
  display: flex;
  align-items: center;
  justify-content: ${(p) => (p.$center ? "center" : "space-between")};
  padding-right: 8px;
`;

const Grip = styled.div`
  display: flex;
  justify-content: center;
  gap: 4px;
  height: 5px;
  padding-top: 1px;
  i { width: 2px; height: 2px; background: #bdbdbd; }
`;

const DetailTabs = styled.div`
  display: flex;
  height: 27px;
  margin: 0 4px -1px;
  color: #303030;
`;

const DetailTab = styled.button<{ $on?: boolean }>`
  width: ${(p) => (p.$on ? 60 : 40)}px;
  border: 1px solid ${(p) => (p.$on ? "#dadada" : "transparent")};
  border-bottom: 0;
  background: ${(p) => (p.$on ? "#fff" : "transparent")};
  z-index: 1;
`;

const DetailPane = styled.div`
  display: flex;
  height: 186px;
  margin: 0 4px;
  border: 1px solid #dadada;
  background: #fff;
  color: #303030;
`;

const Facts = styled.dl`
  flex: 1;
  display: grid;
  grid-template-columns: 84px 1fr;
  grid-template-rows: 18px 18px;
  grid-auto-rows: 16px;
  align-items: center;
  align-content: start;
  column-gap: 4px;
  padding-top: 3px;
  line-height: 16px;
  dt { text-align: right; white-space: nowrap; }
  dd { white-space: pre; grid-column: 2; }
`;

const Caret = styled.i`
  display: inline-block;
  width: 1px;
  height: 16px;
  vertical-align: top;
  background: #111;
`;

const ScrollTrack = styled.div`
  width: 17px;
  margin: 1px 0;
  padding: 2px 6px 3px 4px;
  border-left: 1px solid #dadada;
  &::before {
    content: "";
    display: block;
    height: 100%;
    border-radius: 3px;
    background: #b5b5b5;
  }
`;

const KeyStatus = styled.footer`
  height: 22px;
  padding-top: 4px;
  white-space: pre;
  color: #303030;
`;

type Entry = { label: string; icon?: React.ReactNode; keys?: string; rule?: boolean; off?: boolean; on?: boolean };

const keyMenu: Entry[] = [
  { label: "Refresh", icon: <Sym name="refresh" /> },
  { label: "New key...", icon: <Sym name="plusDoc" />, keys: "Ctrl+N", rule: true },
  { label: "Delete keys", icon: <Sym name="trash" /> },
  { label: "Sign Keys...", icon: <SignArt />, rule: true, off: true },
  { label: "Set Owner Trust..." },
  { label: "Edit Private Key...", icon: <EditKeyArt size={16} /> },
  { label: "Import Keys...", icon: <TransferArt />, rule: true },
  { label: "Export Keys...", icon: <TransferArt out /> },
  { label: "Backup...", on: true },
];

const facts: [string, string][] = [
  ["User name:", "unrulable blog <contact@unrulable.blog>"],
  ["Fingerprint:", "4091 7DD4 BD5B CCF9 42C8  5C11 36E4 C905 44D0 30AD"],
  ["Key ID:", "44D030AD"],
  ["Expires at:", "never expires"],
  ["Owner Trust:", "Ultimate"],
  ["Key validity:", "Fully Valid"],
  ["Key type:", "rsa2048"],
  ["Created at:", "2022-05-06"],
  ["Last update:", "Unknown"],
];

const KeyManager = () => (
  <FloatingWindow $x={554} $y={189} $w={680} $h={631} $bg="#efefef">
    <TitleBar $h={29}>
      <Title $active>GNU Privacy Assistant - Key Manager</Title>
      <WindowControls active />
    </TitleBar>
    <KeyMenus $h={24} $ink="#454545">
      <MenuButton $pad={7}>File</MenuButton>
      <MenuButton $pad={7}>Edit</MenuButton>
      <MenuHost>
        <MenuButton $pad={7} $open aria-expanded="true">Keys</MenuButton>
        <Popup>
          {keyMenu.map((e) => (
            <PopupRow key={e.label} $rule={e.rule}>
              <PopupItem disabled={e.off} $on={e.on}>
                {e.icon}
                <span>{e.label}</span>
                {e.keys && <kbd>{e.keys}</kbd>}
              </PopupItem>
            </PopupRow>
          ))}
        </Popup>
      </MenuHost>
      <MenuButton $pad={7}>Windows</MenuButton>
      <MenuButton $pad={7}>Server</MenuButton>
      <MenuButton $pad={7}>Help</MenuButton>
    </KeyMenus>
    <KeyToolbar>
      <ToolGroup>
        <KeyTool aria-label="Edit"><EditKeyArt /></KeyTool>
        <KeyTool aria-label="Delete"><Sym name="trash" /></KeyTool>
      </ToolGroup>
      <KeyRule />
      <KeyTool aria-label="Preferences"><PrefsArt /></KeyTool>
      <KeyRule />
      <KeyTool aria-label="Refresh"><Sym name="refresh" /></KeyTool>
      <KeyRule />
      <KeyTool aria-label="Files"><FolderArt /></KeyTool>
      <KeyTool aria-label="Clipboard"><Sym name="paste" /></KeyTool>
      <KeyTool aria-label="Card"><CardArt /></KeyTool>
    </KeyToolbar>
    <Heading><KeyRingArt />Key Manager</Heading>
    <KeyList>
      <KeyTable>
        <colgroup>
          <col width={31} />
          <col width={18} />
          <col width={86} />
          <col />
        </colgroup>
        <thead>
          <tr>
            <th><HeadCell $center><Sym name="chevron" /></HeadCell></th>
            <th />
            <th>Created</th>
            <th><HeadCell>User Name<Sym name="chevron" /></HeadCell></th>
          </tr>
        </thead>
        <tbody>
          <tr>
            <td><KeyPairArt /></td>
            <td>P</td>
            <td>2022-05-06</td>
            <td>unrulable blog &lt;contact@unrulable.blog&gt;</td>
          </tr>
        </tbody>
      </KeyTable>
    </KeyList>
    <Grip><i /><i /><i /></Grip>
    <DetailTabs>
      <DetailTab $on>Details</DetailTab>
      <DetailTab>Tofu</DetailTab>
    </DetailTabs>
    <DetailPane>
      <Facts>
        <dd>The key has both a private and a public part<Caret /></dd>
        <dd>The key can be used for certification, signing and encryption.</dd>
        {facts.map(([k, v]) => (
          <React.Fragment key={k}>
            <dt>{k}</dt>
            <dd>{v}</dd>
          </React.Fragment>
        ))}
      </Facts>
      <ScrollTrack />
    </DetailPane>
    <KeyStatus>{"Selected default key: 44D030AD  unrulable blog <contact@unrulable.blog>"}</KeyStatus>
  </FloatingWindow>
);

/* ---------- taskbar ---------- */

const Panel = styled.nav`
  display: flex;
  height: 41px;
  padding: 0 4px 0 2px;
  border-top: 1px solid #1f1f1f;
  background: #303030;
`;

const Launchers = styled.div`
  display: flex;
  gap: 6px;
`;

const Launcher = styled.button<{ $open?: boolean; $active?: boolean }>`
  position: relative;
  display: grid;
  place-items: center;
  width: 40px;
  height: 40px;
  background: ${(p) => (p.$active ? "#545454" : "transparent")};
  box-shadow: ${(p) => (p.$open ? `inset 0 -2px ${ACCENT}` : "none")};
`;

const Badge = styled.span`
  position: absolute;
  left: 2px;
  top: 0;
  width: 12px;
  height: 12px;
  border-radius: 6px;
  background: #4a4a4a;
  color: #fff;
  font-size: 10px;
  line-height: 12px;
  text-align: center;
`;

const Tray = styled.div`
  display: flex;
  align-items: center;
  gap: 8px;
  margin-left: auto;
  color: #e6e6e6;
`;

const TrayButton = styled.button`
  color: #e6e6e6;
`;

const Clock = styled.time`
  font-weight: 700;
  color: #e6e6e6;
`;

const launchers: [string, string, boolean][] = [
  ["mint", "Menu", false],
  ["show", "Show desktop", false],
  ["firefox", "Firefox", true],
  ["terminal", "Terminal", true],
  ["files", "Files", true],
  ["mole", "Mole", false],
  ["editor", "Text editor", true],
  ["atom", "Atom", true],
  ["tri", "Launcher", false],
  ["shot", "Screenshot", false],
  ["gpa", "GNU Privacy Assistant", true],
  ["pictures", "Image viewer", true],
];

const Taskbar = () => (
  <Panel>
    <Launchers>
      {launchers.map(([id, label, open]) => (
        <Launcher key={id} aria-label={label} $open={open} $active={id === "gpa"}>
          <svg width="32" height="32" viewBox="0 0 32 32" aria-hidden="true">{taskArt[id]}</svg>
          {id === "terminal" && <Badge>2</Badge>}
        </Launcher>
      ))}
    </Launchers>
    <Tray>
      {["bluetooth", "notify", "shield", "network", "music"].map((n) => (
        <TrayButton key={n} aria-label={n}><Sym name={n} /></TrayButton>
      ))}
      <Clock>07:45</Clock>
    </Tray>
  </Panel>
);

export default function App() {
  return (
    <>
      <GlobalStyle />
      <Desktop>
        <Screen>
          <Wallpaper />
          <FileManager />
        </Screen>
        <Screen>
          <TextEditor />
          <Taskbar />
          <KeyManager />
        </Screen>
      </Desktop>
    </>
  );
}
